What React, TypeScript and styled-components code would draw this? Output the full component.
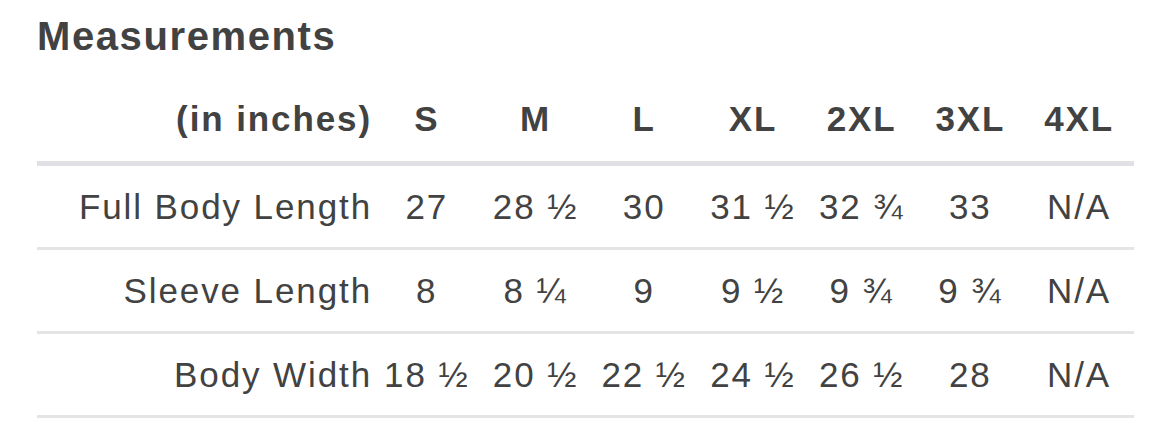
import {FC} from "react"
import styled, {createGlobalStyle} from "styled-components"

const GlobalStyle = createGlobalStyle`
    body {
        margin: 0;
        background: #fff;
        font-family: "Liberation Sans", Arial, Helvetica, sans-serif;
        color: #424242;
    }
`

const sizes = ["S", "M", "L", "XL", "2XL", "3XL", "4XL"]

const rows = [
    {label: "Full Body Length", values: ["27", "28 ½", "30", "31 ½", "32 ¾", "33", "N/A"]},
    {label: "Sleeve Length", values: ["8", "8 ¼", "9", "9 ½", "9 ¾", "9 ¾", "N/A"]},
    {label: "Body Width", values: ["18 ½", "20 ½", "22 ½", "24 ½", "26 ½", "28", "N/A"]},
]

const StyledPage = styled.div`
    padding: 12px 36px 0 37px;
`

const StyledTitle = styled.h2`
    margin: 0;
    font-size: 40px;
    line-height: 48px;
    font-weight: 700;
    letter-spacing: 1.6px;
    color: #424242;
`

const StyledTable = styled.div`
    margin-top: 17px;
    display: flex;
    flex-direction: column;
`

const StyledRow = styled.div<{$head?: boolean}>`
    display: grid;
    grid-template-columns: 336px repeat(7, 1fr);
    align-items: center;
    height: ${p => p.$head ? "84px" : "81px"};
    border-bottom: ${p => p.$head ? "5px solid #e1e1e5" : "3px solid #e4e4e4"};
    font-size: 35px;
    font-weight: ${p => p.$head ? 700 : 400};
    letter-spacing: 1.9px;
    white-space: nowrap;
`

const StyledLabel = styled.div`
    text-align: right;
    padding-right: 1px;
`

const StyledCell = styled.div`
    text-align: center;
    padding-left: 1.9px;
    margin-left: -3px;
`

const App: FC = () => {
    return (
        <StyledPage>
            <GlobalStyle/>
            <StyledTitle>Measurements</StyledTitle>
            <StyledTable>
                <StyledRow $head>
                    <StyledLabel>(in inches)</StyledLabel>
                    {sizes.map(size => <StyledCell key={size}>{size}</StyledCell>)}
                </StyledRow>
                {rows.map(row => (
                    <StyledRow key={row.label}>
                        <StyledLabel>{row.label}</StyledLabel>
                        {row.values.map((v, i) => <StyledCell key={i}>{v}</StyledCell>)}
                    </StyledRow>
                ))}
            </StyledTable>
        </StyledPage>
    )
}

export default App
